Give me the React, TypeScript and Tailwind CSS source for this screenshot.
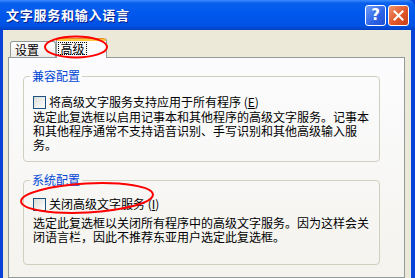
import React from 'react';

const cjk = { fontFamily: '"Noto Sans CJK SC", "Noto Sans", sans-serif' };

function Checkbox() {
  return (
    <span className="block h-[13px] w-[13px] shrink-0 border border-[#1C5180] bg-gradient-to-br from-[#DCDCD7] to-[#FFFFFF]" />
  );
}

function Group({
  title,
  pt,
  h,
  children,
}: {
  title: string;
  pt: string;
  h: string;
  children: React.ReactNode;
}) {
  return (
    <fieldset className={`w-[357px] rounded-[4px] border border-[#D0D0BF] ${h}`}>
      <legend className="ml-[6px] px-[2px] text-[12px] leading-[14px] text-[#0046D5]">{title}</legend>
      <div className={`pl-[9px] ${pt}`}>{children}</div>
    </fieldset>
  );
}

export default function App() {
  return (
    <div
      className="relative flex h-[278px] w-[415px] flex-col overflow-hidden bg-[#0842D9] text-black"
      style={cjk}
    >
      {/* Title bar */}
      <div className="flex h-[30px] shrink-0 items-center rounded-tr-[7px] bg-[linear-gradient(to_bottom,#3D8CFF_0%,#0A60EC_10%,#0058EE_45%,#0052E4_85%,#0040C4_100%)] pl-[6px] pr-[6px]">
        <span className="text-[13px] font-bold leading-[16px] tracking-[0.75px] text-white [text-shadow:1px_1px_0_#0A1E8C]">
          文字服务和输入语言
        </span>
        <div className="ml-auto flex gap-[2px]">
          <div className="flex h-[21px] w-[21px] items-center justify-center rounded-[3px] border border-white bg-[linear-gradient(135deg,#6E9CF8,#2D62E6_60%,#1E4FD0)]">
            <span className="text-[15px] font-bold leading-none text-white" style={{ fontFamily: '"DejaVu Sans", sans-serif' }}>
              ?
            </span>
          </div>
          <div className="flex h-[21px] w-[21px] items-center justify-center rounded-[3px] border border-white bg-[linear-gradient(135deg,#F0956E,#E0572A_55%,#C8401A)]">
            <svg width="11" height="11" viewBox="0 0 11 11">
              <path d="M1.5 1.5 L9.5 9.5 M9.5 1.5 L1.5 9.5" stroke="white" strokeWidth="2" strokeLinecap="square" />
            </svg>
          </div>
        </div>
      </div>

      {/* Body */}
      <div className="ml-[3px] mr-[4px] flex flex-1 flex-col bg-[#ECE9D8] pl-[5px] pr-[6px] pt-[8px]">
        {/* Tabs */}
        <div className="relative z-10 flex h-[19px] items-end pl-[2px]">
          <div className="flex h-[16px] w-[46px] items-center rounded-t-[3px] border border-b-0 border-[#919B9C] bg-gradient-to-b from-[#FFFFFF] to-[#ECEBE6] pl-[4px] text-[12px] leading-[13px]">
            设置
          </div>
          <div className="-mb-px flex h-[20px] w-[51px] flex-col rounded-t-[3px] border-x border-[#919B9C] bg-[#FCFCFE]">
            <div className="h-[3px] rounded-t-[3px] border-t border-[#E68B2C] bg-[#FFC83C]" />
            <div className="ml-[1px] mt-[1px] flex h-[13px] w-[29px] items-center justify-center border border-dotted border-black text-[12px] leading-[12px]">
              高级
            </div>
          </div>
        </div>

        {/* Panel */}
        <div className="flex flex-1 flex-col gap-[11px] border border-[#919B9C] bg-gradient-to-b from-[#FCFCFE] to-[#F4F3EE] pl-[14px] pt-[11px]">
          <Group title="兼容配置" pt="pt-[12px]" h="h-[93px]">
            <div className="flex items-center gap-[3px] text-[12px] leading-[14px]">
              <Checkbox />
              <span>
                将高级文字服务支持应用于所有程序 (<u>E</u>)
              </span>
            </div>
            <div className="mt-[1px] whitespace-nowrap text-[12px] leading-[14px]">
              <div>选定此复选框以启用记事本和其他程序的高级文字服务。记事本</div>
              <div>和其他程序通常不支持语音识别、手写识别和其他高级输入服</div>
              <div>务。</div>
            </div>
          </Group>
          <Group title="系统配置" pt="pt-[10px]" h="h-[92px]">
            <div className="flex items-center gap-[3px] text-[12px] leading-[14px]">
              <Checkbox />
              <span>
                关闭高级文字服务 (<u>I</u>)
              </span>
            </div>
            <div className="mt-[5px] whitespace-nowrap text-[12px] leading-[14px]">
              <div>选定此复选框以关闭所有程序中的高级文字服务。因为这样会关</div>
              <div>闭语言栏，因此不推荐东亚用户选定此复选框。</div>
            </div>
          </Group>
        </div>
      </div>

      {/* Red annotation ellipses */}
      <svg className="pointer-events-none absolute left-0 top-0 z-20" width="415" height="278">
        <ellipse cx="76" cy="47" rx="31" ry="10.5" fill="none" stroke="#FF0000" strokeWidth="2" />
        <ellipse cx="87" cy="198" rx="66" ry="14.5" fill="none" stroke="#FF0000" strokeWidth="2" transform="rotate(-3 87 198)" />
      </svg>
    </div>
  );
}
